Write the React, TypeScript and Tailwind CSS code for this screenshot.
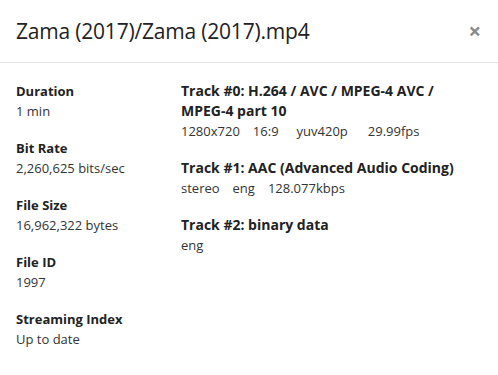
import React from "react";

const info = [
  { label: "Duration", value: "1 min" },
  { label: "Bit Rate", value: "2,260,625 bits/sec" },
  { label: "File Size", value: "16,962,322 bytes" },
  { label: "File ID", value: "1997" },
  { label: "Streaming Index", value: "Up to date" },
];

export default function App() {
  return (
    <div
      className="w-[498px] h-[375px] bg-white text-[#333] overflow-hidden rounded-t-[3px]"
      style={{ fontFamily: '"Open Sans", "Noto Sans", sans-serif' }}
    >
      {/* Header */}
      <div className="flex items-center justify-between h-[63px] px-4 border-b border-[#e5e5e5]">
        <h4 className="text-[21px] leading-none text-[#222] tracking-[-0.2px]">
          Zama (2017)/Zama (2017).mp4
        </h4>
        <button className="text-[#8a8a8a] text-[22px] font-bold leading-none -mt-[3px] mr-[1px]">
          ×
        </button>
      </div>

      {/* Body */}
      <div className="flex pt-[18px] text-[13px] leading-[20px]">
        <div className="w-[181px] shrink-0 pl-4 flex flex-col gap-[17px]">
          {info.map((i) => (
            <div key={i.label}>
              <div className="font-bold text-[#222]">{i.label}</div>
              <div>{i.value}</div>
            </div>
          ))}
        </div>

        <div className="max-w-[285px] flex flex-col gap-[16px]">
          <div>
            <div className="font-bold text-[14px] leading-[20px] text-[#222]">
              Track #0: H.264 / AVC / MPEG-4 AVC / MPEG-4 part 10
            </div>
            <div className="flex leading-[21px]">
              <span>1280x720</span>
              <span className="ml-[13px]">16:9</span>
              <span className="ml-[18px]">yuv420p</span>
              <span className="ml-[20px]">29.99fps</span>
            </div>
          </div>
          <div>
            <div className="font-bold text-[14px] leading-[20px] text-[#222] whitespace-nowrap">
              Track #1: AAC (Advanced Audio Coding)
            </div>
            <div className="flex leading-[21px]">
              <span>stereo</span>
              <span className="ml-[13px]">eng</span>
              <span className="ml-[13px]">128.077kbps</span>
            </div>
          </div>
          <div>
            <div className="font-bold text-[14px] leading-[20px] text-[#222]">Track #2: binary data</div>
            <div className="leading-[21px]">eng</div>
          </div>
        </div>
      </div>
    </div>
  );
}
